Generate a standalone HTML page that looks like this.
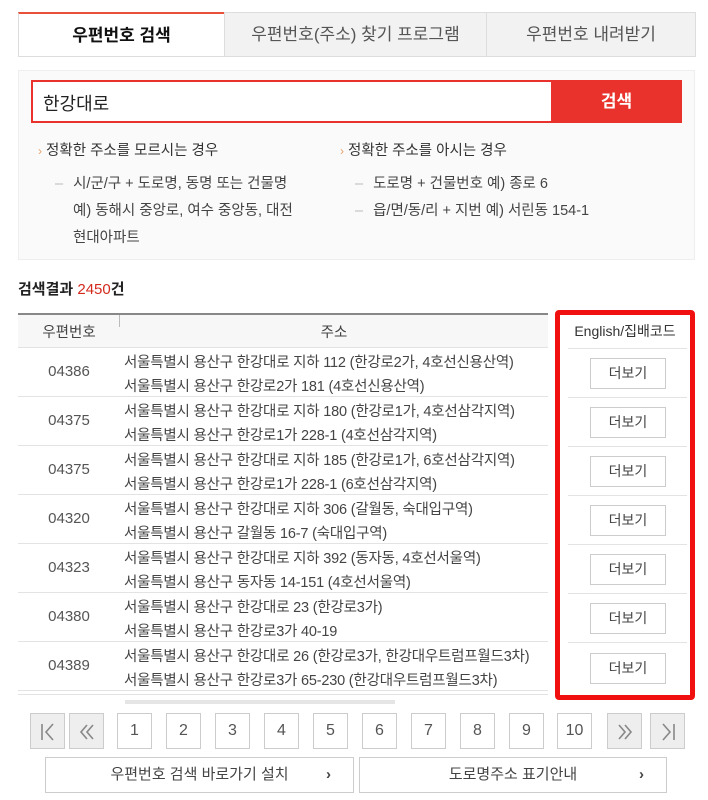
<!DOCTYPE html>
<html><head><meta charset="utf-8"><style>
*{box-sizing:border-box;margin:0;padding:0}
body{width:708px;height:800px;overflow:hidden;background:#fff;font-family:"Liberation Sans","Noto Sans CJK KR",sans-serif;color:#333;position:relative}
.a{position:absolute}
.tab{position:absolute;top:12px;height:45px;border:1px solid #ddd;background:#f2f2f2;font-size:17px;color:#555;text-align:center;line-height:43px}
.hint{font-size:14.5px;color:#333}
.sub{font-size:14.5px;color:#444}
.dash{color:#bbb;margin-right:10px}
.row{position:absolute;left:18px;width:530px;height:49px;border-bottom:1px solid #e3e3e3}
.zip{position:absolute;left:0;width:102px;text-align:center;top:15px;font-size:15px;color:#555}
.ad{position:absolute;left:106px;top:3px;font-size:14.5px;line-height:24px;color:#444;white-space:nowrap;letter-spacing:-0.2px}
.more{position:absolute;left:590px;width:76px;height:31px;border:1px solid #ccc;background:#fff;font-size:14px;text-align:center;line-height:29px;color:#444}
.rl{position:absolute;left:568px;width:119px;height:1px;background:#e3e3e3}
.pg{position:absolute;top:713px;width:35px;height:36px;border:1px solid #ccc;background:#fff;text-align:center;line-height:34px;font-size:16px;color:#555}
.pg.g{background:#eee}
.pg svg{position:absolute;left:8px;top:9px}
.bb{position:absolute;top:757px;height:36px;border:1px solid #ccc;background:#fff;font-size:15px;color:#444;text-align:center;line-height:34px}
.bb span{position:absolute;right:22px;top:0;font-weight:bold}
</style></head><body>
<div class="tab" style="left:18px;width:207px;background:#fff;color:#111;font-weight:bold;border-top:2px solid #e8503a">우편번호 검색</div>
<div class="tab" style="left:224px;width:263px">우편번호(주소) 찾기 프로그램</div>
<div class="tab" style="left:486px;width:210px">우편번호 내려받기</div>

<div class="a" style="left:18px;top:70px;width:677px;height:190px;background:#fafafa;border:1px solid #eee"></div>
<div class="a" style="left:31px;top:80px;width:651px;height:43px;border:2px solid #e8322b;background:#fff"></div>
<div class="a" style="left:43px;top:90px;font-size:18px;color:#222">한강대로</div>
<div class="a" style="left:551px;top:80px;width:131px;height:43px;background:#e8322b;color:#fff;font-weight:bold;font-size:17px;text-align:center;line-height:43px">검색</div>
<div class="a hint" style="left:38px;top:139px"><span style="color:#e8a06a;font-size:12px">›</span> 정확한 주소를 모르시는 경우</div>
<div class="a hint" style="left:340px;top:139px"><span style="color:#e8a06a;font-size:12px">›</span> 정확한 주소를 아시는 경우</div>
<div class="a sub" style="left:55px;top:172px"><span class="dash">–</span>시/군/구 + 도로명, 동명 또는 건물명</div>
<div class="a sub" style="left:73px;top:199px">예) 동해시 중앙로, 여수 중앙동, 대전</div>
<div class="a sub" style="left:73px;top:226px">현대아파트</div>
<div class="a sub" style="left:355px;top:172px"><span class="dash">–</span>도로명 + 건물번호 예) 종로 6</div>
<div class="a sub" style="left:355px;top:199px"><span class="dash">–</span>읍/면/동/리 + 지번 예) 서린동 154-1</div>

<div class="a" style="left:18px;top:278px;font-size:15px;font-weight:bold;color:#222">검색결과 <span style="color:#d42a1e;font-weight:normal">2450</span>건</div>

<div class="a" style="left:18px;top:313px;width:530px;height:2px;background:#888"></div>
<div class="a" style="left:18px;top:315px;width:530px;height:33px;background:#f7f7f7;border-bottom:1px solid #e3e3e3"></div>
<div class="a" style="left:119px;top:315px;width:1px;height:12px;background:#bbb"></div>
<div class="a" style="left:18px;top:321px;width:102px;text-align:center;font-size:14.5px;color:#444">우편번호</div>
<div class="a" style="left:120px;top:321px;width:428px;text-align:center;font-size:14.5px;color:#444">주소</div>

<div class="row" style="top:348px"><div class="zip">04386</div><div class="ad">서울특별시 용산구 한강대로 지하 112 (한강로2가, 4호선신용산역)<br>서울특별시 용산구 한강로2가 181 (4호선신용산역)</div></div>
<div class="row" style="top:397px"><div class="zip">04375</div><div class="ad">서울특별시 용산구 한강대로 지하 180 (한강로1가, 4호선삼각지역)<br>서울특별시 용산구 한강로1가 228-1 (4호선삼각지역)</div></div>
<div class="row" style="top:446px"><div class="zip">04375</div><div class="ad">서울특별시 용산구 한강대로 지하 185 (한강로1가, 6호선삼각지역)<br>서울특별시 용산구 한강로1가 228-1 (6호선삼각지역)</div></div>
<div class="row" style="top:495px"><div class="zip">04320</div><div class="ad">서울특별시 용산구 한강대로 지하 306 (갈월동, 숙대입구역)<br>서울특별시 용산구 갈월동 16-7 (숙대입구역)</div></div>
<div class="row" style="top:544px"><div class="zip">04323</div><div class="ad">서울특별시 용산구 한강대로 지하 392 (동자동, 4호선서울역)<br>서울특별시 용산구 동자동 14-151 (4호선서울역)</div></div>
<div class="row" style="top:593px"><div class="zip">04380</div><div class="ad">서울특별시 용산구 한강대로 23 (한강로3가)<br>서울특별시 용산구 한강로3가 40-19</div></div>
<div class="row" style="top:642px"><div class="zip">04389</div><div class="ad">서울특별시 용산구 한강대로 26 (한강로3가, 한강대우트럼프월드3차)<br>서울특별시 용산구 한강로3가 65-230 (한강대우트럼프월드3차)</div></div>

<div class="a" style="left:555px;top:310px;width:140px;height:390px;border:5px solid #f01010;border-radius:4px"></div>
<div class="a" style="left:560px;top:321px;width:130px;text-align:center;font-size:14px;color:#333">English/집배코드</div>
<div class="rl" style="top:348px"></div><div class="rl" style="top:397px"></div><div class="rl" style="top:446px"></div><div class="rl" style="top:495px"></div><div class="rl" style="top:544px"></div><div class="rl" style="top:593px"></div><div class="rl" style="top:642px"></div>
<div class="more" style="top:358px">더보기</div><div class="more" style="top:407px">더보기</div><div class="more" style="top:456px">더보기</div><div class="more" style="top:505px">더보기</div><div class="more" style="top:554px">더보기</div><div class="more" style="top:603px">더보기</div><div class="more" style="top:653px">더보기</div>
<div class="a" style="left:18px;top:694px;width:530px;height:1px;background:#e3e3e3"></div>
<div class="a" style="left:125px;top:700px;width:270px;height:4px;background:#e5e5e5"></div>

<div class="pg g" style="left:30px"><svg width="18" height="18" viewBox="0 0 18 18" fill="none" stroke="#888" stroke-width="1.6"><path d="M3 1v16M14 1L7 9l7 8"/></svg></div>
<div class="pg g" style="left:69px"><svg width="18" height="18" viewBox="0 0 18 18" fill="none" stroke="#888" stroke-width="1.6"><path d="M9 2L3 9l6 7M15 2L9 9l6 7"/></svg></div>
<div class="pg" style="left:117px">1</div><div class="pg" style="left:166px">2</div><div class="pg" style="left:215px">3</div><div class="pg" style="left:264px">4</div><div class="pg" style="left:313px">5</div><div class="pg" style="left:362px">6</div><div class="pg" style="left:411px">7</div><div class="pg" style="left:460px">8</div><div class="pg" style="left:509px">9</div><div class="pg" style="left:557px">10</div>
<div class="pg g" style="left:607px"><svg width="18" height="18" viewBox="0 0 18 18" fill="none" stroke="#888" stroke-width="1.6"><path d="M3 2l6 7-6 7M9 2l6 7-6 7"/></svg></div>
<div class="pg g" style="left:650px"><svg width="18" height="18" viewBox="0 0 18 18" fill="none" stroke="#888" stroke-width="1.6"><path d="M4 1l7 8-7 8M15 1v16"/></svg></div>

<div class="bb" style="left:45px;width:309px">우편번호 검색 바로가기 설치<span>›</span></div>
<div class="bb" style="left:359px;width:308px">도로명주소 표기안내<span>›</span></div>
</body></html>
